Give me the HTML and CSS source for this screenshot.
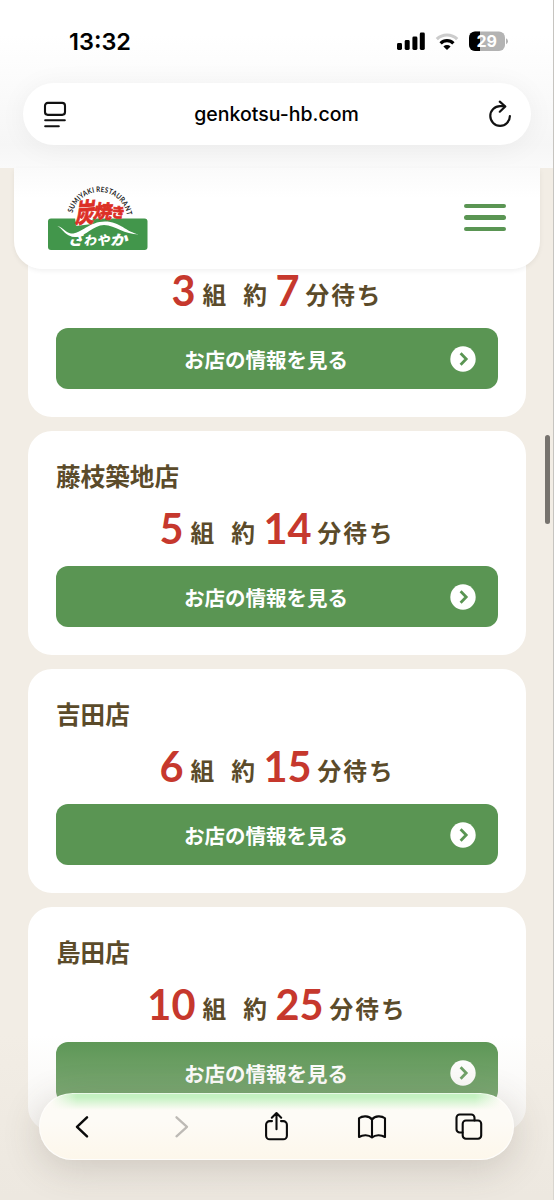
FILE: index.html
```html
<!DOCTYPE html>
<html lang="ja">
<head>
<meta charset="utf-8">
<title>さわやか</title>
<link rel="stylesheet" href="styles.css">
</head>
<body>
<svg class="defs" width="0" height="0">
  <symbol id="go" viewBox="0 0 26 26"><circle cx="13" cy="13" r="12.7" fill="#fff"/><path d="M10.6 7.2 16.2 13l-5.6 5.8" fill="none" stroke="#5a9553" stroke-width="2.8"/></symbol>
</svg>
<div class="screen">
  <main class="shops">
    <section class="card">
      <p class="wait first"><b class="num">3</b><span class="groups">組</span><span class="about">約</span><b class="num">7</b><span class="minutes">分待ち</span></p>
      <a class="button"><span>お店の情報を見る</span><svg class="go"><use href="#go"/></svg></a>
    </section>
    <section class="card">
      <h2 class="name">藤枝築地店</h2>
      <p class="wait"><b class="num">5</b><span class="groups">組</span><span class="about">約</span><b class="num">14</b><span class="minutes">分待ち</span></p>
      <a class="button"><span>お店の情報を見る</span><svg class="go"><use href="#go"/></svg></a>
    </section>
    <section class="card">
      <h2 class="name">吉田店</h2>
      <p class="wait"><b class="num">6</b><span class="groups">組</span><span class="about">約</span><b class="num">15</b><span class="minutes">分待ち</span></p>
      <a class="button"><span>お店の情報を見る</span><svg class="go"><use href="#go"/></svg></a>
    </section>
    <section class="card">
      <h2 class="name">島田店</h2>
      <p class="wait"><b class="num">10</b><span class="groups">組</span><span class="about">約</span><b class="num">25</b><span class="minutes">分待ち</span></p>
      <a class="button"><span>お店の情報を見る</span><svg class="go"><use href="#go"/></svg></a>
    </section>
  </main>

  <div class="top">
    <div class="chrome">
      <div class="status">
        <span class="time">13:32</span>
        <svg class="signals" width="112" height="22" viewBox="0 0 112 22">
          <rect x="0" y="12" width="5" height="7" rx="1.4"/><rect x="7.7" y="9" width="5" height="10" rx="1.4"/><rect x="15.4" y="5.5" width="5" height="13.5" rx="1.4"/><rect x="22.8" y="1.5" width="5" height="17.5" rx="1.4"/>
          <g class="waves"><path d="M39.8 8.2a14.5 14.5 0 0 1 20.4 0" stroke="#ccc"/><path d="M43.6 12.3a9 9 0 0 1 12.8 0" stroke="#000"/></g>
          <path d="M46.4 15.4a5.1 5.1 0 0 1 7.2 0L50 18.9z"/>
          <clipPath id="cell"><rect x="72" y=".5" width="36" height="19.5" rx="6"/></clipPath>
          <g clip-path="url(#cell)"><rect x="72" width="36" height="21" fill="#b3b3b3"/><rect x="72" width="11" height="21"/></g>
          <path d="M109 7.2q2 .8 2 3t-2 3z" fill="#b3b3b3"/>
          <text class="charge" x="79.5" y="16">29</text>
        </svg>
      </div>
      <div class="address">
        <svg width="24" height="27" viewBox="0 0 24 27" fill="none" stroke="#111" stroke-width="2.1" stroke-linecap="round"><rect x="2" y="1.9" width="20" height="12" rx="2.8"/><path d="M2.2 19.3h19.6M2.2 25.2h13.6"/></svg>
        <span class="url">genkotsu-hb.com</span>
        <svg width="24" height="28" viewBox="0 0 24 28" fill="none" stroke="#111" stroke-width="2.2" stroke-linecap="round" stroke-linejoin="round"><path d="M21.9 16A9.8 9.8 0 1 1 12.1 6.2H17M11.8 1.7 17.3 6.5 11.8 11.7"/></svg>
      </div>
    </div>
    <header class="header">
      <svg class="logo" width="102" height="68" viewBox="0 0 102 68">
        <path id="arc" d="M25.500 30A27.900 27.900 0 0 1 80 32" fill="none"/>
        <rect x="1" y="35.500" width="99.500" height="31.500" rx="3" fill="#42964b"/>
        <text class="arc-text" textLength="76" lengthAdjust="spacingAndGlyphs"><textPath href="#arc" textLength="72" lengthAdjust="spacingAndGlyphs">SUMIYAKI RESTAURANT</textPath></text>
        <path d="M28 34 46 33 45 41 29 43z" fill="#fff"/>
        <g class="brand-red"><text font-size="22" transform="translate(28 40) rotate(-4) skewX(-12) scale(.86 1.2)">炭</text><text font-size="18.500" transform="translate(46 34.500) rotate(3) skewX(-8)">焼</text><text font-size="14" transform="translate(64 34) rotate(4)">き</text></g>
        <path d="M10 43C16 44 19 50 24 50.500 34 51 42 38.500 58 38.500 73 38.500 79 49 92 51.500 77 51.500 69 42.500 57 42 46 42.500 39 53 29 54 17 53.500 17 46 10 43z" fill="#fff"/>
        <g class="brand-white"><text font-size="16" transform="translate(20.500 62) skewX(-12)">さ</text><text font-size="12.500" transform="translate(36.500 62) skewX(-12)">わ</text><text font-size="13" transform="translate(49.500 62) skewX(-12)">や</text><text font-size="14" transform="translate(63 62) skewX(-12) scale(1.25 1)">か</text></g>
      </svg>
      <div class="menu"><i></i><i></i><i></i></div>
    </header>
  </div>

  <div class="scrollbar"></div>
  <div class="edge"></div>
  <div class="shade"></div>
  <nav class="toolbar">
    <svg width="28" height="28" viewBox="0 0 28 28"><path d="M18 4.300 8 13.800l10 9.500" stroke-width="2.500"/></svg>
    <svg width="28" height="28" viewBox="0 0 28 28"><path class="off" d="m11.500 4.300 10.500 9.500-10.500 9.500" stroke-width="2.300"/></svg>
    <svg width="28" height="28" viewBox="0 0 28 28"><g transform="translate(1.500 -.8)"><path d="M9.500 8.900H7.200a3.600 3.600 0 0 0-3.600 3.600v11a3.600 3.600 0 0 0 3.600 3.600h13.600a3.600 3.600 0 0 0 3.600-3.600v-11a3.600 3.600 0 0 0-3.600-3.600h-2.300M14 17V.900M9.300 5.500 14 .900l4.700 4.600"/></g></svg>
    <svg width="30" height="28" viewBox="0 0 30 28"><path d="M15 6.500C12 2.500 5.500 2.500 2 5.300V24c4-2.400 9.500-2.400 13 .5 3.500-2.900 9-2.900 13-.5V5.300C24.500 2.500 18 2.500 15 6.500V24"/></svg>
    <svg width="28" height="28" viewBox="0 0 28 28"><path d="M7.500 19.500H4.700A3.200 3.200 0 0 1 1.500 16.300V4.700a3.200 3.200 0 0 1 3.200-3.200h11.600a3.200 3.200 0 0 1 3.200 3.200v2.800"/><rect x="7.700" y="7.500" width="18.500" height="18.200" rx="3.200"/></svg>
  </nav>
</div>
</body>
</html>
```
FILE: styles.css
```css
* { box-sizing: border-box; }
body { margin: 0; font-family: Lato, "Noto Sans CJK JP", sans-serif; }
.defs { position: absolute; }
.screen { position: relative; width: 554px; height: 1200px; overflow: hidden; background: #f2ede5; }
.shops { display: flex; flex-direction: column; gap: 14px; padding: 193px 28px 0; }
.card { height: 224px; flex: none; padding: 26px 28px 28px; border-radius: 24px; background: #fff; color: #5b4b2a; }
.name { margin: 0; height: 38px; font: 700 24.6px/36px "Noto Sans CJK JP", sans-serif; }
.wait { display: flex; justify-content: center; align-items: flex-start; margin: 0; height: 71px; padding-top: 5px; font: 700 23.700px/55px "Noto Sans CJK JP", sans-serif; white-space: nowrap; }
.wait.first { margin-top: 38px; }
.wait span { padding-top: 5px; }
.num { font: 700 41.500px/56px Lato, sans-serif; color: #c6382d; }
.groups { margin-left: 7px; }
.about { margin: 0 8.500px 0 17px; }
.minutes { margin-left: 6px; letter-spacing: 2px; margin-right: 0; }
.button { display: flex; align-items: center; justify-content: flex-end; height: 61px; padding-right: 22px; border-radius: 12px; background: #5a9553; color: #fff; font: 700 20.5px/61px "Noto Sans CJK JP", sans-serif; }
.button span { margin-right: 102px; padding-top: 1px; }
.go { width: 26px; height: 26px; }
.top { position: absolute; inset: 0 0 auto; }
.chrome { height: 168px; padding: 30px 23px 0; background: linear-gradient(#fff 0, #fff 35px, #f6f6f6 145px, #fafafa 168px); }
.status { display: flex; justify-content: space-between; height: 53px; padding: 0 22px 0 46px; }
.time { font: 600 23.5px/24px Inter, sans-serif; }
.signals { margin-top: 1px; }
.waves { fill: none; stroke-width: 3.2; }
.charge { font: 700 16px Inter, sans-serif; fill: #fff; }
.address { display: flex; align-items: center; justify-content: space-between; height: 62px; padding: 0 19px 0 20px; border-radius: 31px; background: #fff; box-shadow: 0 3px 28px #0000000d; }
.url { font: 500 19.5px/24px Inter, sans-serif; margin-left: -2px; }
.header { display: flex; justify-content: space-between; align-items: flex-start; width: 526px; height: 101px; margin: 0 auto; padding: 15px 34px 0 33px; border-radius: 0 0 28px 28px; background: linear-gradient(#fafafa, #fff 30px); box-shadow: 0 2px 5px #0000000f; }
.logo { overflow: visible; }
.arc-text { font: 700 7.500px Lato, sans-serif; fill: #222; }
.brand-red { font-family: "Noto Sans CJK JP", sans-serif; font-weight: 700; fill: #dc2f26; stroke: #dc2f26; stroke-width: .8; }
.brand-white { font-family: "Noto Sans CJK JP", sans-serif; font-weight: 900; fill: #fff; }
.menu { display: flex; flex-direction: column; gap: 7px; padding-top: 21px; }
.menu i { width: 42px; height: 4.300px; border-radius: 3px; background: #5a9553; }
.scrollbar { position: absolute; left: 545px; top: 435px; width: 5px; height: 89px; border-radius: 3px; background: #77736e; }
.edge { position: absolute; right: 0; top: 0; width: 1px; height: 100%; background: #c6c4c0; }
.shade { position: absolute; inset: 1035px 0 0; background: linear-gradient(#e9e4dc00, #e9e4dc50 80px, #e9e4dc90); }
.toolbar { position: absolute; left: 39px; top: 1093px; display: flex; align-items: center; justify-content: space-between; width: 475px; height: 67px; padding: 0 31px 0 30px; border-radius: 34px; background: linear-gradient(#fff0 0, #fff0 4px, #fdfbf6 17px), linear-gradient(90deg, #fdfbf6 12px, #c4f1c1 38px, #c4f1c1 436px, #fdfbf6 462px); box-shadow: 0 8px 38px #4b403733, inset 0 0 0 1px #ffffff99; }
.toolbar::before { content: ""; position: absolute; inset: 28px 1px 1px; border-radius: 0 0 33px 33px; background: linear-gradient(#fdf7eb00, #fdf7eb); }
.toolbar svg { position: relative; fill: none; stroke: #0b0b0b; stroke-width: 2.100; stroke-linecap: round; stroke-linejoin: round; overflow: visible; }
.toolbar .off { stroke: #bdbab5; }
```
